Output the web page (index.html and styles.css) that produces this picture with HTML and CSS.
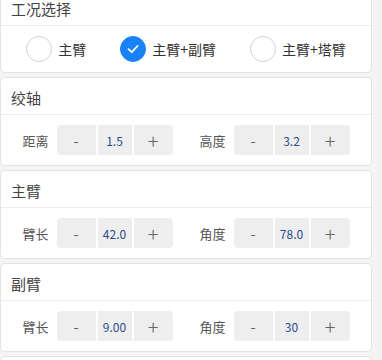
FILE: index.html
```html
<!DOCTYPE html>
<html lang="zh-CN">
<head>
    <meta charset="UTF-8">
    <meta name="viewport" content="width=device-width, initial-scale=1.0">
    <title>工况设置</title>
    <link rel="stylesheet" href="styles.css">
</head>
<body>
    <div class="page">
        <div class="card">
            <div class="card-title">工况选择</div>
            <div class="card-body radio-row">
                <label class="radio">
                    <span class="radio-dot"></span>
                    <span>主臂</span>
                </label>
                <label class="radio checked">
                    <span class="radio-dot">
                        <svg width="14" height="14" viewBox="0 0 14 14"><polyline points="2.5,7.2 5.8,10.2 11.5,4" fill="none" stroke="#fff" stroke-width="1.8" stroke-linecap="round" stroke-linejoin="round"/></svg>
                    </span>
                    <span>主臂+副臂</span>
                </label>
                <label class="radio">
                    <span class="radio-dot"></span>
                    <span>主臂+塔臂</span>
                </label>
            </div>
        </div>

        <div class="card">
            <div class="card-title">绞轴</div>
            <div class="card-body field-row">
                <div class="field">
                    <span class="field-label">距离</span>
                    <div class="stepper">
                        <span class="step-btn minus">-</span>
                        <span class="step-value">1.5</span>
                        <span class="step-btn plus">+</span>
                    </div>
                </div>
                <div class="field">
                    <span class="field-label">高度</span>
                    <div class="stepper">
                        <span class="step-btn minus">-</span>
                        <span class="step-value">3.2</span>
                        <span class="step-btn plus">+</span>
                    </div>
                </div>
            </div>
        </div>

        <div class="card">
            <div class="card-title">主臂</div>
            <div class="card-body field-row">
                <div class="field">
                    <span class="field-label">臂长</span>
                    <div class="stepper">
                        <span class="step-btn minus">-</span>
                        <span class="step-value">42.0</span>
                        <span class="step-btn plus">+</span>
                    </div>
                </div>
                <div class="field">
                    <span class="field-label">角度</span>
                    <div class="stepper">
                        <span class="step-btn minus">-</span>
                        <span class="step-value">78.0</span>
                        <span class="step-btn plus">+</span>
                    </div>
                </div>
            </div>
        </div>

        <div class="card">
            <div class="card-title">副臂</div>
            <div class="card-body field-row">
                <div class="field">
                    <span class="field-label">臂长</span>
                    <div class="stepper">
                        <span class="step-btn minus">-</span>
                        <span class="step-value">9.00</span>
                        <span class="step-btn plus">+</span>
                    </div>
                </div>
                <div class="field">
                    <span class="field-label">角度</span>
                    <div class="stepper">
                        <span class="step-btn minus">-</span>
                        <span class="step-value">30</span>
                        <span class="step-btn plus">+</span>
                    </div>
                </div>
            </div>
        </div>

        <div class="card card-next"></div>
    </div>
</body>
</html>
```

FILE: styles.css
```css
body {
    margin: 0;
    padding: 0;
    background-color: #f4f4f4;
    font-family: "Noto Sans CJK SC", "Noto Sans", sans-serif;
    color: #444;
}
.page {
    width: 372px;
    margin-top: -12px;
    display: flex;
    flex-direction: column;
    gap: 4px;
}
.card {
    background-color: #fff;
    border: 1px solid #e3e3e3;
    border-radius: 5px;
}
.card-next {
    height: 30px;
}
.card-title {
    padding: 11px 10px 7px;
    line-height: 18px;
    font-size: 15px;
    color: #444;
    border-bottom: 1px solid #ececec;
}
.card-body {
    padding: 10px 0;
}
.radio-row {
    display: flex;
    justify-content: center;
    gap: 34px;
}
.radio {
    display: flex;
    align-items: center;
    gap: 6px;
    font-size: 14px;
    color: #333;
}
.radio-dot {
    width: 24px;
    height: 24px;
    border: 1px solid #d2d2d2;
    border-radius: 50%;
    display: flex;
    align-items: center;
    justify-content: center;
}
.radio.checked .radio-dot {
    background-color: #1a82f7;
    border-color: #1a82f7;
}
.field-row {
    display: flex;
    justify-content: center;
    gap: 27px;
}
.field {
    display: flex;
    align-items: center;
    gap: 8px;
}
.field-label {
    font-size: 13px;
    color: #555;
}
.stepper {
    display: flex;
    gap: 2px;
    height: 30px;
}
.step-btn, .step-value {
    background-color: #eeeeee;
    display: flex;
    align-items: center;
    justify-content: center;
}
.step-btn {
    width: 39px;
    color: #666;
}
.step-btn.minus {
    border-radius: 4px 0 0 4px;
    font-size: 15px;
}
.step-btn.plus {
    border-radius: 0 4px 4px 0;
    font-size: 20px;
    font-weight: 300;
}
.step-value {
    width: 34px;
    font-size: 12px;
    color: #2b4c8c;
}
```
